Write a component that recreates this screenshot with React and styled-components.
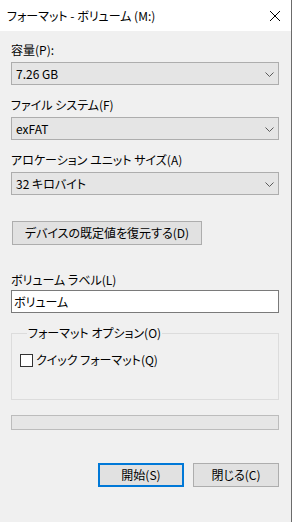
import React from 'react';
import styled, { createGlobalStyle } from 'styled-components';

const Global = createGlobalStyle`
  html, body { margin: 0; padding: 0; background: #f0f0f0; }
  body {
    font-family: "Noto Sans CJK JP", "Noto Sans", sans-serif;
    font-size: 12px;
    color: #000;
  }
  * { box-sizing: border-box; }
`;

const Window = styled.div`
  width: 292px;
  height: 522px;
  display: flex;
  flex-direction: column;
  background: #f0f0f0;
  border-right: 1px solid #6b6b6b;
  font-feature-settings: "palt";
  overflow: hidden;
`;

const TitleBar = styled.div`
  height: 31px;
  flex: none;
  background: #fff;
  display: flex;
  align-items: center;
  justify-content: space-between;
  padding-left: 7px;
`;

const Title = styled.span`
  line-height: 16px;
`;

const CloseBtn = styled.div`
  width: 32px;
  height: 31px;
  display: flex;
  align-items: center;
  justify-content: center;
`;

const Body = styled.div`
  flex: 1;
  display: flex;
  flex-direction: column;
  padding: 11px 12px 0 11px;
`;

const Field = styled.div`
  display: flex;
  flex-direction: column;
  gap: 4px;
  margin-bottom: ${p => p.$mb ?? 12}px;
`;

const Label = styled.div`
  line-height: 16px;
  height: 16px;
  white-space: nowrap;
`;

const Combo = styled.div`
  height: 23px;
  border: 1px solid #adadad;
  background: #e5e5e5;
  display: flex;
  align-items: center;
  justify-content: space-between;
  padding: 0 4px 0 4px;
  line-height: 16px;
`;

const Button = styled.div`
  height: 24px;
  width: ${p => p.$w}px;
  border: ${p => (p.$default ? '2px solid #0078d7' : '1px solid #adadad')};
  background: #e1e1e1;
  display: flex;
  align-items: center;
  justify-content: center;
  line-height: 16px;
  white-space: nowrap;
`;

const RestoreRow = styled.div`
  display: flex;
  margin-top: 14px;
  padding-left: 1px;
`;

const LabelField = styled.div`
  display: flex;
  flex-direction: column;
  gap: 2px;
  margin-top: 27px;
`;

const TextInput = styled.div`
  height: 23px;
  border: 1px solid #7a7a7a;
  background: #fff;
  display: flex;
  align-items: center;
  padding-left: 2px;
  line-height: 16px;
`;

const Group = styled.fieldset`
  margin: 12px 0 0 0;
  height: 75px;
  border: 1px solid #dcdcdc;
  padding: 11px 0 0 8px;
  min-width: 0;
`;

const Legend = styled.legend`
  padding: 0 1px;
  margin-left: 7px;
  line-height: 16px;
`;

const CheckRow = styled.div`
  display: flex;
  align-items: center;
  gap: 3px;
  height: 16px;
  line-height: 16px;
`;

const CheckBox = styled.span`
  width: 13px;
  height: 13px;
  border: 1px solid #333;
  background: #fff;
  flex: none;
`;

const Progress = styled.div`
  margin-top: 15px;
  height: 15px;
  border: 1px solid #bcbcbc;
  background: #e6e6e6;
`;

const Actions = styled.div`
  display: flex;
  justify-content: flex-end;
  gap: 9px;
  margin-top: 33px;
`;

const Chevron = () => (
  <svg width="9" height="6" viewBox="0 0 9 6" style={{ marginTop: 2 }}>
    <path d="M0.5 0.5 L4.5 4.5 L8.5 0.5" fill="none" stroke="#5a5a5a" strokeWidth="1" />
  </svg>
);

const CloseIcon = () => (
  <svg width="10" height="10" viewBox="0 0 10 10">
    <path d="M0 0 L10 10 M10 0 L0 10" stroke="#000" strokeWidth="1" />
  </svg>
);

const ComboField = ({ label, value }) => (
  <Field>
    <Label>{label}</Label>
    <Combo>
      <span>{value}</span>
      <Chevron />
    </Combo>
  </Field>
);

export default function App() {
  return (
    <>
      <Global />
      <Window>
        <TitleBar>
          <Title>フォーマット - ボリューム (M:)</Title>
          <CloseBtn><CloseIcon /></CloseBtn>
        </TitleBar>
        <Body>
          <ComboField label="容量(P):" value="7.26 GB" />
          <ComboField label="ファイル システム(F)" value="exFAT" />
          <ComboField label="アロケーション ユニット サイズ(A)" value="32 キロバイト" />
          <RestoreRow>
            <Button $w={190}>デバイスの既定値を復元する(D)</Button>
          </RestoreRow>
          <LabelField>
            <Label>ボリューム ラベル(L)</Label>
            <TextInput>ボリューム</TextInput>
          </LabelField>
          <Group>
            <Legend>フォーマット オプション(O)</Legend>
            <CheckRow>
              <CheckBox />
              <span>クイック フォーマット(Q)</span>
            </CheckRow>
          </Group>
          <Progress />
          <Actions>
            <Button $w={86} $default>開始(S)</Button>
            <Button $w={86}>閉じる(C)</Button>
          </Actions>
        </Body>
      </Window>
    </>
  );
}
